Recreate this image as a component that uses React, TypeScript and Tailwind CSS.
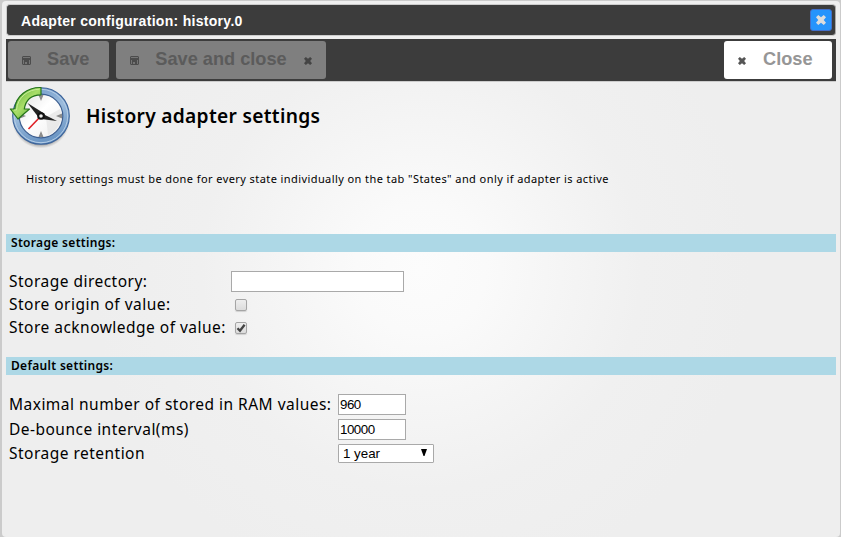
import React from "react";

const humanist = "font-['Noto_Sans',sans-serif]";
const arial = "font-['Liberation_Sans',Arial,sans-serif]";

function CrossIcon({ className, size = 8 }: { className: string; size?: number }) {
  return (
    <svg width={size} height={size} viewBox="0 0 7 7" className={className} fill="currentColor">
      <path d="M0 1.6 1.6 0 3.5 1.6 5.4 0 7 1.6 5.4 3.5 7 5.4 5.4 7 3.5 5.4 1.6 7 0 5.4 1.6 3.5z" />
    </svg>
  );
}

function DiskIcon({ className }: { className: string }) {
  return (
    <svg width="9" height="9" viewBox="0 0 9 9" className={className}>
      <path d="M1 0h7l1 1v7L8 9H1L0 8V1z" fill="#4c4c4c" />
      <path d="M1 1h7v1H1zM1 4h1v4H1zM7 4h1v4H7zM3 6h2v2H3z" fill="#757575" />
    </svg>
  );
}

function HistoryClock() {
  return (
    <svg width="64" height="64" viewBox="0 0 64 64" className="block shrink-0">
      <defs>
        <linearGradient id="rim" x1="0" y1="0" x2="0.3" y2="1">
          <stop offset="0" stopColor="#6f98c8" />
          <stop offset=".5" stopColor="#9bbbdc" />
          <stop offset="1" stopColor="#6d97c5" />
        </linearGradient>
        <linearGradient id="face" x1="0" y1="0" x2="1" y2="1">
          <stop offset="0" stopColor="#e2e2e2" />
          <stop offset=".45" stopColor="#fff" />
          <stop offset="1" stopColor="#ededed" />
        </linearGradient>
        <linearGradient id="leaf" x1="0" y1="0" x2="1" y2="1">
          <stop offset="0" stopColor="#4fa52d" />
          <stop offset=".5" stopColor="#a9de69" />
          <stop offset="1" stopColor="#409b22" />
        </linearGradient>
        <radialGradient id="shade">
          <stop offset=".85" stopColor="#777" stopOpacity=".7" />
          <stop offset="1" stopColor="#999" stopOpacity="0" />
        </radialGradient>
      </defs>
      <ellipse cx="33" cy="34.5" rx="29" ry="29" fill="url(#shade)" />
      <circle cx="33" cy="31" r="28.3" fill="url(#rim)" stroke="#3c649b" strokeWidth="1.1" />
      <circle cx="33" cy="31" r="26.7" fill="none" stroke="#b4cde6" strokeWidth="1" />
      <circle cx="33" cy="31" r="21.8" fill="url(#face)" stroke="#3d5f91" strokeWidth="1.2" />
      <path d="M38 32 52 24a21 21 0 0 1-12 26z" fill="#ddd" opacity=".5" />
      <g fill="#8b8b8b">
        <path d="M30.5 10h5L33 16zM30.5 52h5L33 46zM12 28.5v5l6-2.5zM54 28.5v5L48 31z" />
      </g>
      <path d="M33 31 20.5 44" stroke="#df2026" strokeWidth="1.6" />
      <path d="M19.5 18 37 29 34 34 29.5 31z" fill="#222" />
      <path d="M34 28.5 49 36 33 34z" fill="#222" />
      <circle cx="33" cy="31" r="2.8" fill="#eee" stroke="#111" strokeWidth="2" />
      <path d="M33 2.5v7.3C23 10 17.5 15.5 16.3 24h5.2L10 34 2.3 24h4.5C7.6 11 19.5 2.1 33 2.5z" fill="url(#leaf)" stroke="#26751a" strokeWidth="1.2" strokeLinejoin="round" />
      <path d="M31.5 4.2C20 4.5 9.5 12 8.5 25H6" fill="none" stroke="#c9ee99" strokeWidth="1" />
    </svg>
  );
}

function SectionHeader({ children, className }: { children: React.ReactNode; className: string }) {
  return (
    <h2 className={`flex h-[18px] items-center bg-[#add8e6] pl-[5px] text-[12px] leading-[18px] font-semibold tracking-[0.32px] ${humanist} ${className}`}>
      {children}
    </h2>
  );
}

function Check({ checked }: { checked?: boolean }) {
  return (
    <span className="mb-0.5 ml-1 flex size-3 shrink-0 items-center justify-center rounded-[2px] border border-[#a5a5a5] bg-linear-to-b from-[#eee] to-[#dcdcdc] shadow-[0_1px_1px_#d0d0d0]">
      {checked && (
        <svg width="10" height="10" viewBox="0 0 10 10">
          <path d="M1.5 5.2 4 7.8 8.6 1.8" fill="none" stroke="#444" strokeWidth="2.3" />
        </svg>
      )}
    </span>
  );
}

function Label({ children, className }: { children: React.ReactNode; className: string }) {
  return (
    <span className={`shrink-0 pl-[3px] text-[15.5px] tracking-[0.48px] whitespace-nowrap ${humanist} ${className}`}>
      {children}
    </span>
  );
}

export default function App() {
  return (
    <div className="h-[537px] w-[841px] overflow-hidden bg-[#cbcbcb] pt-px pr-px pl-0.5 text-black">
      <main className="h-[536px] w-[838px] rounded-[4px] bg-[#eee] bg-[radial-gradient(circle_at_50%_50%,#fcfcfc_0px,#fafafa_65px,#f5f5f5_140px,#f0f0f0_220px,#eee_330px)] px-1 pt-[3px]">
        <header className={`flex h-8 w-[830px] items-center justify-between rounded-[4px] border border-[#ccc] border-r-[#aaa] bg-[#3c3c3c] pr-[3px] pl-3.5 ${arial}`}>
          <h1 className="mt-0.5 text-[14px] font-bold tracking-[0.3px] text-white">Adapter configuration: history.0</h1>
          <button className="flex h-[22px] w-[22px] items-center justify-center rounded-[3px] border border-[#426ec9] bg-[#2694fc]">
            <CrossIcon size={10} className="text-[#ddd]" />
          </button>
        </header>

        <div className={`mt-[3px] flex h-[43px] w-[830px] border-b border-[#ccc] bg-[#3c3c3c] pt-0.5 pl-0.5 text-[18.2px] font-bold ${arial}`}>
          <button className="flex h-[38px] w-[101px] items-center rounded-[3px] bg-[#7f7f7f] pl-3.5 text-[#5b5b5b]">
            <DiskIcon className="mt-px" />
            <span className="ml-4">Save</span>
          </button>
          <button className="ml-[7px] flex h-[38px] w-[210px] items-center rounded-[3px] bg-[#7f7f7f] pl-3.5 text-[#5b5b5b]">
            <DiskIcon className="mt-px" />
            <span className="ml-[15px] w-[134px] whitespace-nowrap">Save and close</span>
            <CrossIcon className="mt-0.5 ml-4 text-[#444]" />
          </button>
          <button className="mr-1 ml-auto flex h-[38px] w-[108px] items-center rounded-[3px] bg-white pl-3.5 text-[#969696]">
            <CrossIcon className="mt-0.5 text-[#555]" />
            <span className="ml-[17px]">Close</span>
          </button>
        </div>

        <div className="mt-[3px] ml-0.5 flex h-16 items-start">
          <HistoryClock />
          <h2 className={`mt-[17px] ml-3.5 text-[19.2px] leading-7 font-semibold tracking-[0.3px] whitespace-nowrap ${humanist}`}>History adapter settings</h2>
        </div>
        <p className={`mt-[22px] ml-5 h-4 text-[11px] leading-4 tracking-[0.42px] whitespace-nowrap ${humanist}`}>
          History settings must be done for every state individually on the tab "States" and only if adapter is active
        </p>

        <SectionHeader className="mt-[47px] w-[830px]">Storage settings:</SectionHeader>
        <div className="mt-[18px]">
          <div className="flex h-6 items-center">
            <Label className="mb-px w-[225px]">Storage directory:</Label>
            <input className="h-[21px] w-[173px] -translate-y-px border border-[#a9a9a9] bg-white" />
          </div>
          <div className="flex h-[23px] items-center">
            <Label className="mb-px w-[225px]">Store origin of value:</Label>
            <Check />
          </div>
          <div className="flex h-[23px] items-center">
            <Label className="mb-px w-[225px]">Store acknowledge of value:</Label>
            <Check checked />
          </div>
        </div>

        <SectionHeader className="mt-[17px] w-[830px]">Default settings:</SectionHeader>
        <div className={`mt-[17px] text-[13.33px] ${arial}`}>
          <div className="flex h-[25px] items-center">
            <Label className="w-[332px]">Maximal number of stored in RAM values:</Label>
            <input defaultValue="960" className="h-[21px] w-[68px] border border-[#a9a9a9] bg-white px-px tracking-[-0.5px]" />
          </div>
          <div className="flex h-[25px] items-center">
            <Label className="w-[332px]">De-bounce interval(ms)</Label>
            <input defaultValue="10000" className="h-[21px] w-[68px] border border-[#a9a9a9] bg-white px-px tracking-[-0.5px]" />
          </div>
          <div className="flex h-[23px] items-center">
            <Label className="w-[332px]">Storage retention</Label>
            <button className="flex h-[19px] w-24 items-center justify-between rounded-[1px] border border-[#a9a9a9] bg-white pr-1.5 pl-1">
              <span>1 year</span>
              <svg width="6" height="7" viewBox="0 0 6 7" className="mb-0.5"><path d="M0 0h6L3.5 7h-1z" /></svg>
            </button>
          </div>
        </div>
      </main>
    </div>
  );
}
